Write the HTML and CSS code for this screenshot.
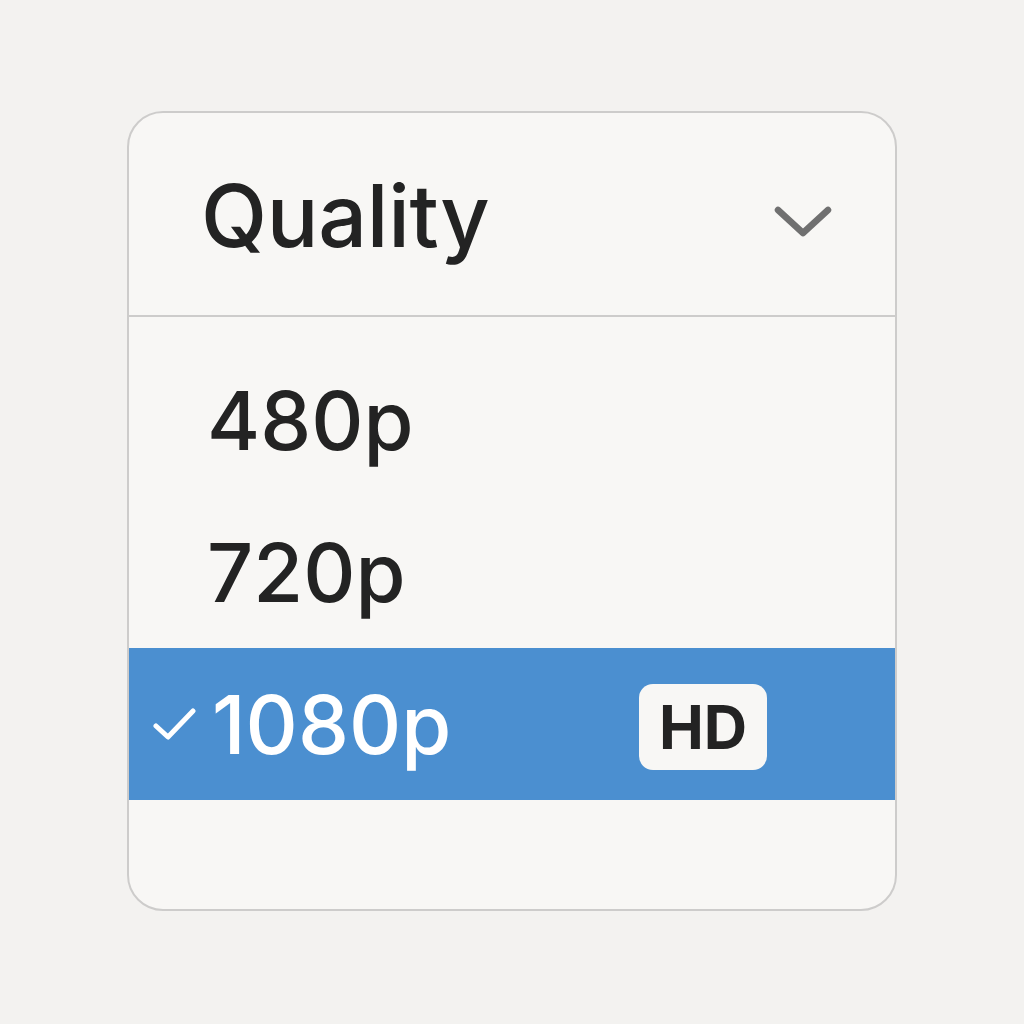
FILE: index.html
```html
<!DOCTYPE html>
<html>
<head>
<meta charset="utf-8">
<link rel="stylesheet" href="styles.css">
</head>
<body>
<div class="card">
  <div class="header">
    <span class="title">Quality</span>
    <svg class="chevron" width="60" height="36" viewBox="0 0 60 36"><path d="M5 5 L30 28 L55 5" fill="none" stroke="#707070" stroke-width="6.5" stroke-linecap="round" stroke-linejoin="round"/></svg>
  </div>
  <div class="list">
    <div class="row"><span class="check"></span><span class="label">480p</span></div>
    <div class="row"><span class="check"></span><span class="label">720p</span></div>
    <div class="row selected">
      <span class="check"><svg width="46" height="36" viewBox="0 0 46 36"><path d="M3 20 L15 31 L40 5" fill="none" stroke="#fff" stroke-width="5" stroke-linecap="round" stroke-linejoin="round"/></svg></span>
      <span class="label">1080p</span>
      <span class="badge">HD</span>
    </div>
  </div>
</div>
</body>
</html>
```
FILE: styles.css
```css
html, body {
  margin: 0;
  padding: 0;
  background: #f3f2f0;
  width: 1024px;
  height: 1024px;
}
body {
  font-family: Inter, "Liberation Sans", sans-serif;
  color: #232323;
}
.card {
  box-sizing: border-box;
  margin: 111px 0 0 127px;
  width: 770px;
  height: 800px;
  border: 2px solid #cdcccb;
  border-radius: 36px;
  background: #f8f7f5;
  overflow: hidden;
  display: flex;
  flex-direction: column;
}
.header {
  box-sizing: border-box;
  height: 204px;
  border-bottom: 2px solid #cdcccb;
  display: flex;
  align-items: center;
  padding: 0 62px 0 72px;
}
.title {
  font-size: 86px;
  font-weight: 550;
  letter-spacing: -0.3px;
  line-height: 1;
  margin-top: 4px;
}
.chevron {
  margin-left: auto;
  margin-top: 18px;
}
.list {
  padding-top: 27px;
  display: flex;
  flex-direction: column;
}
.row {
  height: 152px;
  display: flex;
  align-items: center;
  padding: 0 128px 0 24px;
}
.check {
  width: 54px;
  height: 36px;
  display: flex;
  align-items: center;
}
.label {
  font-size: 81px;
  font-weight: 550;
  line-height: 1;
  margin-top: 2px;
}
.selected {
  background: #4b8fd0;
  color: #ffffff;
}
.selected .label {
  margin-left: 5px;
}
.badge {
  margin-left: auto;
  margin-top: 6px;
  width: 128px;
  height: 86px;
  border-radius: 14px;
  background: #f8f7f5;
  color: #232323;
  font-size: 60px;
  font-weight: 700;
  display: flex;
  align-items: center;
  justify-content: center;
}
```
